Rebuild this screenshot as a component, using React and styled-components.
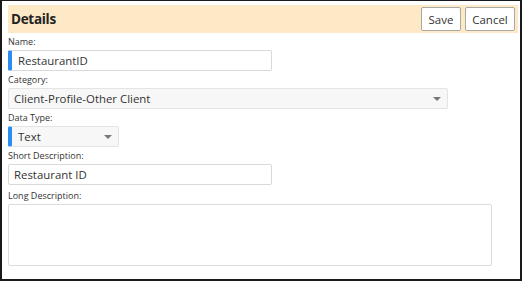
import React from 'react';
import styled, {createGlobalStyle} from 'styled-components';

const GlobalStyle = createGlobalStyle`
  html, body {
    margin: 0;
    padding: 0;
    background: #ffffff;
  }
  body {
    font-family: "Open Sans", "Noto Sans", sans-serif;
    color: #333333;
  }
`;

const Frame = styled.div`
  box-sizing: border-box;
  width: 522px;
  height: 281px;
  border-style: solid;
  border-color: #1a1a1a;
  border-width: 1px 2px 2px 2px;
  padding: 4px 2px 0 6px;
  background: #ffffff;
`;

const Header = styled.div`
  display: flex;
  align-items: center;
  justify-content: space-between;
  height: 28px;
  padding: 0 3px 0 3px;
  background: #fde9c5;
`;

const Title = styled.h2`
  margin: 0;
  font-size: 13.5px;
  font-weight: 700;
  letter-spacing: -0.3px;
  color: #222222;
`;

const Actions = styled.div`
  display: flex;
  gap: 4px;
`;

const Button = styled.button`
  box-sizing: border-box;
  width: ${p => p.$width}px;
  height: 24px;
  padding: 0;
  font-family: inherit;
  font-size: 11.5px;
  color: #333333;
  background: #ffffff;
  border: 1px solid #a9a9a9;
  border-radius: 2px;
`;

const Form = styled.div`
  display: flex;
  flex-direction: column;
`;

const Label = styled.label`
  display: block;
  font-size: 9px;
  line-height: 17px;
  color: #333333;
  margin-top: ${p => p.$extra || 0}px;
`;

const Field = styled.div`
  box-sizing: border-box;
  display: flex;
  align-items: center;
  width: ${p => p.$width}px;
  height: 21px;
  padding-left: ${p => (p.$required ? 6 : 5)}px;
  padding-right: 6px;
  font-size: 11.4px;
  color: #333333;
  background: ${p => (p.$select ? '#f7f7f7' : '#ffffff')};
  border: 1px solid ${p => (p.$select ? '#e4e4e4' : '#d9d9d9')};
  border-left: ${p => (p.$required ? '4px solid #2b8def' : undefined)};
  border-radius: 2px;
`;

const Value = styled.span`
  flex: 1;
  white-space: nowrap;
`;

const Caret = styled.span`
  width: 0;
  height: 0;
  border-left: 4px solid transparent;
  border-right: 4px solid transparent;
  border-top: 4px solid #777777;
`;

const TextArea = styled.div`
  box-sizing: border-box;
  width: 484px;
  height: 62px;
  background: #ffffff;
  border: 1px solid #dcdcdc;
  border-radius: 2px;
`;

export default function App() {
  return (
    <>
      <GlobalStyle/>
      <Frame>
        <Header>
          <Title>Details</Title>
          <Actions>
            <Button $width={40}>Save</Button>
            <Button $width={50}>Cancel</Button>
          </Actions>
        </Header>
        <Form>
          <Label>Name:</Label>
          <Field $width={264} $required>
            <Value>RestaurantID</Value>
          </Field>
          <Label>Category:</Label>
          <Field $width={440} $select>
            <Value>Client-Profile-Other Client</Value>
            <Caret/>
          </Field>
          <Label>Data Type:</Label>
          <Field $width={111} $select $required>
            <Value>Text</Value>
            <Caret/>
          </Field>
          <Label>Short Description:</Label>
          <Field $width={264}>
            <Value>Restaurant ID</Value>
          </Field>
          <Label $extra={2}>Long Description:</Label>
          <TextArea/>
        </Form>
      </Frame>
    </>
  );
}
